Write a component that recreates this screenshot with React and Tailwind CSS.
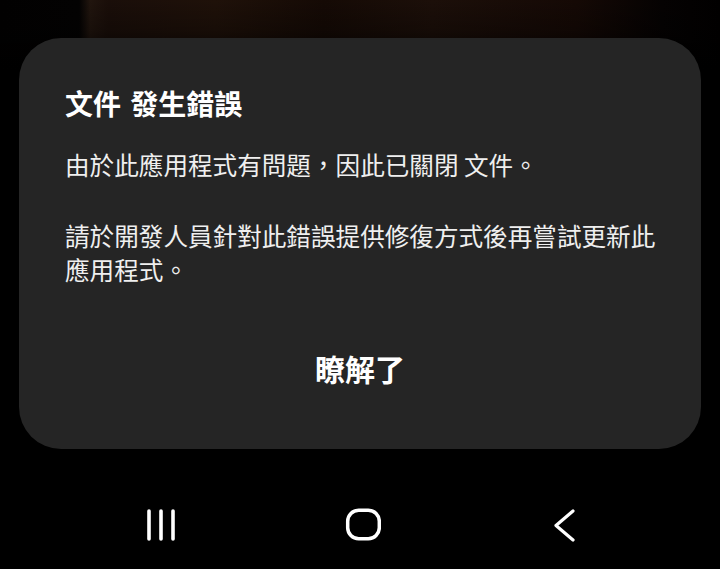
export default function App() {
  return (
    <div
      className="w-[720px] h-[569px] overflow-hidden flex flex-col bg-black bg-[linear-gradient(to_bottom,rgba(0,0,0,0)_0px,rgba(0,0,0,0.25)_30px,#000_70px),linear-gradient(to_right,#020101_0%,#030202_11%,#21150e_12.5%,#1a0e09_15%,#1f1109_30%,#150a05_45%,#1c0f09_60%,#150905_80%,#050202_92%,#010000_100%)]"
      style={{ fontFamily: '"Noto Sans CJK TC", "Noto Sans", sans-serif' }}
    >
      <div className="mt-[38px] mx-[19px] h-[411px] rounded-[42px] bg-[#252525] flex flex-col pl-[46px] pr-[40px] pt-[48px]">
        <div className="text-[28px] leading-[35px] font-bold text-white [word-spacing:3px]">
          文件 發生錯誤
        </div>
        <div className="mt-[26px] text-[24.6px] leading-[34px] text-[#efefef]">
          由於此應用程式有問題，因此已關閉 文件。
        </div>
        <div className="mt-[37px] text-[24.6px] leading-[34px] text-[#efefef]">
          請於開發人員針對此錯誤提供修復方式後再嘗試更新此應用程式。
        </div>
        <div className="mt-[62px] -ml-[46px] -mr-[40px] text-center text-[30px] leading-[40px] font-bold text-white">
          瞭解了
        </div>
      </div>
      <div className="mt-[46px] h-[60px] pl-[60px] grid grid-cols-[202px_202px_202px] items-center">
        <div className="flex justify-center">
          <svg width="34" height="34" viewBox="0 0 34 34">
            <g stroke="#fff" strokeWidth="3.6" strokeLinecap="round">
              <line x1="5" y1="3" x2="5" y2="31" />
              <line x1="17" y1="3" x2="17" y2="31" />
              <line x1="29" y1="3" x2="29" y2="31" />
            </g>
          </svg>
        </div>
        <div className="flex justify-center">
          <svg width="36" height="34" viewBox="0 0 36 34">
            <rect x="2.7" y="2.2" width="31.6" height="28.6" rx="11" fill="none" stroke="#fff" strokeWidth="3.5" />
          </svg>
        </div>
        <div className="flex justify-center">
          <svg width="24" height="34" viewBox="0 0 24 34">
            <polyline points="20,3 3,17.5 20,32" fill="none" stroke="#fff" strokeWidth="3.2" strokeLinecap="round" strokeLinejoin="round" />
          </svg>
        </div>
      </div>
    </div>
  );
}
